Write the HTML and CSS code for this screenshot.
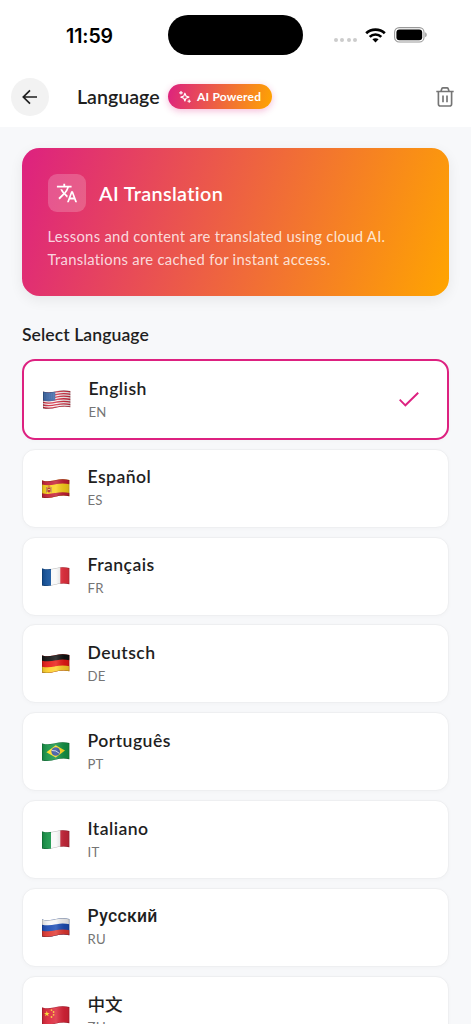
FILE: index.html
```html
<!DOCTYPE html>
<html lang="en">
<head>
<meta charset="utf-8">
<title>Language</title>
<link rel="stylesheet" href="styles.css">
</head>
<body>
<svg class="defs" width="0" height="0">
  <defs>
    <clipPath id="flag"><path d="M0 1.4C6 3 10 1.9 14 1S22-.2 27.3 1V17.2C22 16.1 18 16.7 14 17.6S6 19.7 0 18.4Z"/></clipPath>
    <path id="wave" d="M-1-.2C6 1.6 10 .5 14-.4S22-1.6 28.3-.3" fill="none"/>
    <linearGradient id="shade"><stop offset="0" stop-color="#000" stop-opacity=".14"/><stop offset=".25" stop-color="#fff" stop-opacity=".08"/><stop offset=".5" stop-color="#fff" stop-opacity=".16"/><stop offset=".8" stop-color="#000" stop-opacity=".1"/><stop offset="1" stop-color="#000" stop-opacity=".16"/></linearGradient>
    <g id="gloss"><rect width="28" height="20" fill="url(#shade)"/><path d="M0 1.4C6 3 10 1.9 14 1S22-.2 27.3 1V17.2C22 16.1 18 16.7 14 17.6S6 19.7 0 18.4Z" fill="none" stroke="#000" stroke-opacity=".3" stroke-width=".9"/></g>
  </defs>
</svg>
<header class="top">
  <div class="status">
    <span class="time">11:59</span>
    <span class="island"></span>
    <span class="signal"><i></i><i></i><i></i><i></i></span>
    <svg class="wifi" width="21" height="15" viewBox="0 0 21 15"><g fill="none" stroke="#000" stroke-width="2.7"><path d="M1.2 5.3C6.3.4 14.7.4 19.8 5.3"/><path d="M4.7 8.9c3.3-3.2 8.3-3.2 11.6 0"/></g><path d="M7.4 11.3c1.8-1.5 4.4-1.5 6.2 0L10.5 14.6Z"/></svg>
    <svg class="battery" width="33" height="16" viewBox="0 0 33 16"><rect x=".6" y=".6" width="29.4" height="14.4" rx="4.6" fill="none" stroke="#999" stroke-width="1.1"/><rect x="2.4" y="2.4" width="25.8" height="10.8" rx="3"/><path d="M31.2 5.3c2 .8 2 4.200 0 5Z" fill="#999"/></svg>
  </div>
  <div class="nav">
    <span class="back"><svg width="16" height="16" viewBox="0 0 16 16" fill="none" stroke="#1f1f1f" stroke-width="1.7"><path d="M15 8H1.700M8 1.300 1.300 8 8 14.700"/></svg></span>
    <h1>Language</h1>
    <span class="pill">
      <svg width="12" height="12" viewBox="0 0 12 12" fill="none" stroke="#fff" stroke-width="1.15" stroke-linejoin="round"><path d="M5.900 2.200 7 5l2.900 1.100L7 7.200 5.900 10 4.800 7.200 1.900 6.100 4.800 5Z"/><path d="M2 0v3.600M.2 1.800h3.600M10.200 8.500v3.300M8.500 10.200h3.300"/></svg>
      <span>AI Powered</span>
    </span>
    <svg class="trash" width="18" height="20" viewBox="0 0 18 20" fill="none" stroke="#757575" stroke-width="1.65"><path d="M.3 4.500h17.400M5 4.300l.8-2.500Q6.100.9 7 .9h4q.9 0 1.200.9l.8 2.500M2.400 4.700V17q0 2 2 2h9.200q2 0 2-2V4.700M7 8.500v6.700M11 8.500v6.700"/></svg>
  </div>
</header>
<main>
  <section class="hero">
    <div class="hero-head">
      <span class="tile"><svg width="22" height="22" viewBox="0 0 24 24" fill="#fff"><path d="M12.870 15.070l-2.540-2.510.030-.030A17.500 17.500 0 0014.070 6H17V4h-7V2H8v2H1v2h11.170C11.500 7.920 10.440 9.750 9 11.350 8.070 10.320 7.300 9.190 6.690 8h-2c.73 1.630 1.730 3.170 2.980 4.560l-5.090 5.020L4 19l5-5 3.110 3.110.76-2.040zM18.500 10h-2L12 22h2l1.120-3h4.750L21 22h2l-4.500-12zm-2.620 7l1.620-4.330L19.120 17h-3.240z"/></svg></span>
      <h2>AI Translation</h2>
    </div>
    <p>Lessons and content are translated using cloud AI.<br>Translations are cached for instant access.</p>
  </section>
  <h3>Select Language</h3>
  <div class="list">
    <div class="card selected">
      <svg class="flag" viewBox="0 0 28 20"><g clip-path="url(#flag)"><rect width="28" height="20" fill="#f5f2f2"/><g stroke="#d02b40" stroke-width="1.300"><use href="#wave" y="2.200"/><use href="#wave" y="4.750"/><use href="#wave" y="7.300"/><use href="#wave" y="9.850"/><use href="#wave" y="12.400"/><use href="#wave" y="14.950"/><use href="#wave" y="17.500"/></g><path d="M0 1.400C5 2.700 9 2.200 12.300 1.400V10.300C8 11.500 4 11.500 0 10.500Z" fill="#3b65a5"/><g stroke="#9cb2d5" stroke-opacity=".6" stroke-width=".5" stroke-dasharray=".7 1.100"><path d="M1 4h10.500M1 6h10.500M1 8h10.500" /></g><use href="#gloss"/></g></svg>
      <div class="label"><b>English</b><small>EN</small></div>
      <svg class="check" width="20" height="15" viewBox="0 0 20 15" fill="none" stroke="#dd2180" stroke-width="1.900"><path d="M.7 7.600 6.400 13.300 19.200.8"/></svg>
    </div>
    <div class="card">
      <svg class="flag" viewBox="0 0 28 20"><g clip-path="url(#flag)"><rect width="28" height="20" fill="#fbd11b"/><g stroke="#c31f35" stroke-width="5"><use href="#wave" y="3"/><use href="#wave" y="16.800"/></g><path d="M4.500 8v5.500M9.200 8v5.500" stroke="#b68a54"/><path d="M5.400 8.500h3.100v4q-1.500 2-3.100 0Z" fill="#b32a2b"/><path d="M5.500 7.400q1.500-2 3 0Z" fill="#9a5a20"/><path d="M6 10.500h2" stroke="#e6b96a"/><use href="#gloss"/></g></svg>
      <div class="label"><b>Español</b><small>ES</small></div>
    </div>
    <div class="card">
      <svg class="flag" viewBox="0 0 28 20"><g clip-path="url(#flag)"><rect width="28" height="20" fill="#f8f8f8"/><rect width="9" height="20" fill="#10509b"/><rect x="18.300" width="10" height="20" fill="#eb3341"/><use href="#gloss"/></g></svg>
      <div class="label"><b>Français</b><small>FR</small></div>
    </div>
    <div class="card">
      <svg class="flag" viewBox="0 0 28 20"><g clip-path="url(#flag)"><rect width="28" height="20" fill="#e91b16"/><g stroke-width="6"><use href="#wave" y="3.700" stroke="#111"/><use href="#wave" y="15.700" stroke="#ffd02a"/></g><use href="#gloss"/></g></svg>
      <div class="label"><b>Deutsch</b><small>DE</small></div>
    </div>
    <div class="card">
      <svg class="flag" viewBox="0 0 28 20"><g clip-path="url(#flag)"><rect width="28" height="20" fill="#159447"/><path d="M4.400 10.300 13.700 3.200 23 8.500 13.700 15.600Z" fill="#ffdc22"/><circle cx="13.700" cy="9.500" r="4.300" fill="#34509e"/><path d="M9.800 8.500q4.300-.5 7.500 2.800" stroke="#dce7ee" stroke-width=".9" fill="none"/><use href="#gloss"/></g></svg>
      <div class="label"><b>Português</b><small>PT</small></div>
    </div>
    <div class="card">
      <svg class="flag" viewBox="0 0 28 20"><g clip-path="url(#flag)"><rect width="28" height="20" fill="#f8f8f8"/><rect width="9" height="20" fill="#159447"/><rect x="18.300" width="10" height="20" fill="#cc2a3d"/><use href="#gloss"/></g></svg>
      <div class="label"><b>Italiano</b><small>IT</small></div>
    </div>
    <div class="card">
      <svg class="flag" viewBox="0 0 28 20"><g clip-path="url(#flag)"><rect width="28" height="20" fill="#1b4cb4"/><g stroke-width="6"><use href="#wave" y="3.700" stroke="#f7f7f7"/><use href="#wave" y="15.700" stroke="#e13832"/></g><use href="#gloss"/></g></svg>
      <div class="label"><b class="cyr">Русский</b><small>RU</small></div>
    </div>
    <div class="card">
      <svg class="flag" viewBox="0 0 28 20"><g clip-path="url(#flag)"><rect width="28" height="20" fill="#dc2438"/><path d="M4.800 4.800 5.500 6.900h2.100L5.900 8.200l.7 2.100-1.800-1.300L3 10.300l.7-2.100L2 6.900h2.100Z" fill="#ffdf2f"/><g fill="#f8c92d"><circle cx="9.500" cy="4.100" r=".9"/><circle cx="11.600" cy="6" r=".9"/><circle cx="11.600" cy="8.800" r=".9"/><circle cx="9.500" cy="11" r=".9"/></g><use href="#gloss"/></g></svg>
      <div class="label"><b class="cjk">中文</b><small>ZH</small></div>
    </div>
  </div>
</main>
</body>
</html>
```
FILE: styles.css
```css
* { box-sizing: border-box; }
html { height: 100%; overflow: hidden; }
body {
  margin: 0;
  height: 1024px;
  overflow: hidden;
  background: #f7f8fa;
  color: #1f1f1f;
  font-family: Lato, "Noto Sans CJK SC", sans-serif;
}
h1, h2, h3, p { margin: 0; }
svg { display: block; flex: none; }
.defs { position: absolute; }
.top { height: 127px; background: #fff; }
.status { height: 70px; display: flex; align-items: center; padding-left: 66px; }
.time {
  width: 102px;
  padding-top: 2px;
  font: 600 19.500px/24px Inter, sans-serif;
  letter-spacing: -.1px;
  color: #000;
}
.island { width: 135px; height: 40px; border-radius: 20px; background: #000; }
.signal { display: flex; gap: 2.400px; margin: 10px 0 0 31px; }
.signal i { width: 4px; height: 4px; border-radius: 2px; background: #ccc; }
.wifi { margin-left: 7.500px; }
.battery { margin-left: 8px; }
.nav { height: 53px; display: flex; align-items: center; padding: 0 17px 0 11px; }
.back {
  width: 38px;
  height: 38px;
  border-radius: 50%;
  background: #f2f2f2;
  display: grid;
  place-items: center;
}
h1 { margin-left: 28px; width: 91px; font-size: 19.600px; line-height: 26px; font-weight: 600; white-space: nowrap; }
.pill {
  height: 25px;
  width: 104px;
  border-radius: 13px;
  padding-left: 11px;
  display: flex;
  align-items: center;
  gap: 6px;
  background: linear-gradient(103.500deg, #dd2180, #ffa500);
  box-shadow: 0 2px 7px rgba(221, 33, 128, .3);
  color: #fff;
  font-size: 12px;
  font-weight: 700;
  letter-spacing: .2px;
  white-space: nowrap;
}
.trash { margin-left: auto; }
main { padding: 21px 22px 0; }
.hero {
  height: 148px;
  border-radius: 17.500px;
  padding: 25.500px;
  background: linear-gradient(109.100deg, #dd2180, #ffa500);
  box-shadow: 0 4px 14px rgba(0, 0, 0, .07);
  color: #fff;
}
.hero-head { display: flex; align-items: center; gap: 13px; }
.tile {
  width: 38.500px;
  height: 38.500px;
  border-radius: 9px;
  background: rgba(255, 255, 255, .2);
  display: grid;
  place-items: center;
}
h2 { font-size: 19.800px; line-height: 26px; font-weight: 600; letter-spacing: .35px; }
.hero p { margin-top: 13px; font-size: 14.800px; line-height: 22.500px; letter-spacing: .3px; color: rgba(255, 255, 255, .8); white-space: nowrap; }
h3 { margin-top: 27px; font-size: 17.600px; line-height: 24px; font-weight: 600; letter-spacing: .06px; }
.list { margin-top: 12px; display: flex; flex-direction: column; gap: 8.800px; }
.card {
  height: 79px;
  flex: none;
  border: 1px solid #eeeff1;
  border-radius: 13px;
  background: #fff;
  display: flex;
  align-items: center;
  padding: 0 29px 0 19px;
  box-shadow: 0 1px 4px rgba(0, 0, 0, .025);
}
.selected { height: 81px; border: 2px solid #dd2180; padding-right: 28px; }
.flag { width: 28px; height: 20px; margin-top: 1px; }
.label { margin-left: 17.500px; }
.label b { display: block; font-size: 17.600px; line-height: 24px; font-weight: 600; letter-spacing: .45px; }
.label small { display: block; font-size: 13.200px; line-height: 20px; margin-top: 1px; color: #757575; letter-spacing: .2px; }
.label b { margin-top: -.7px; }
.label .cyr { font-family: Roboto, sans-serif; font-weight: 500; letter-spacing: .3px; }
.label .cjk { font-family: "Noto Sans CJK SC", sans-serif; font-weight: 500; letter-spacing: 0; }
.check { margin-left: auto; }
```
